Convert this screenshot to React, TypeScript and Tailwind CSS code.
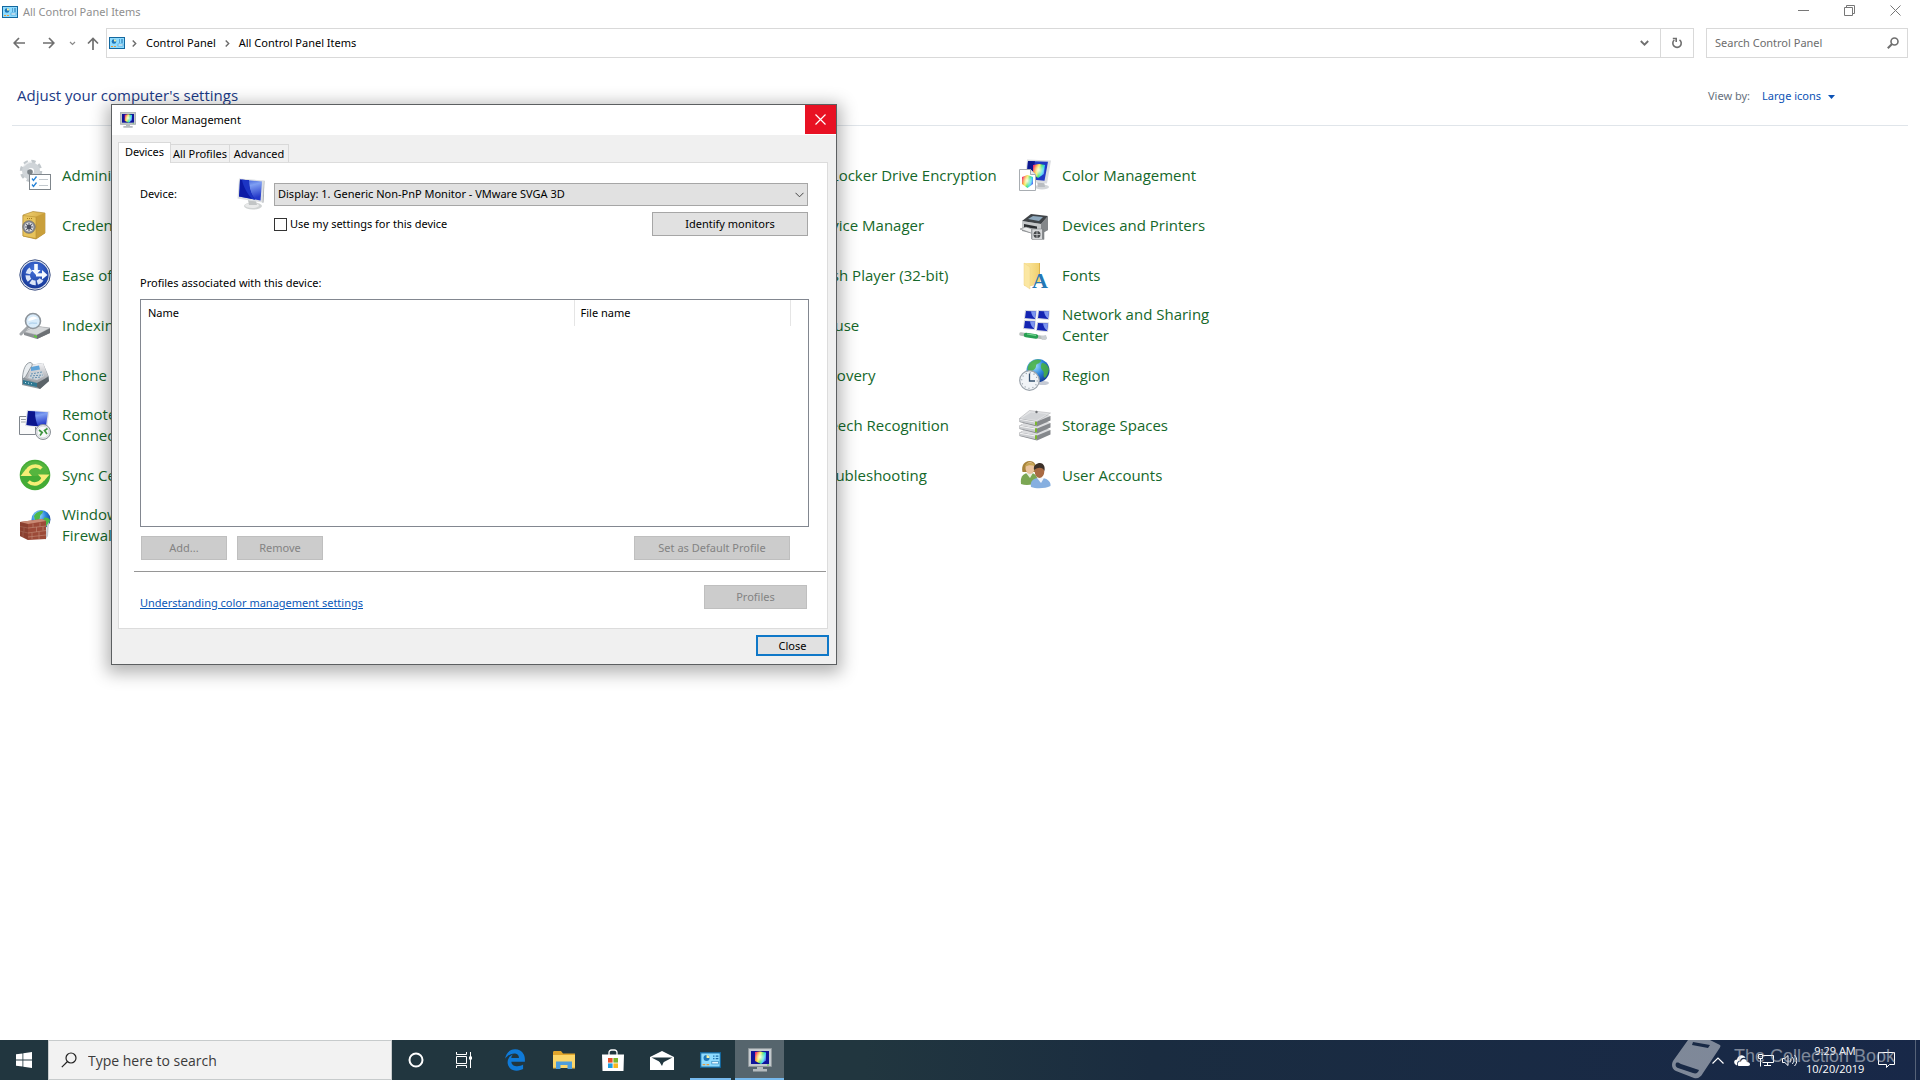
import { useState } from "react";
import type { ReactNode } from "react";
import { FaEdgeLegacy } from "react-icons/fa";

/* ---------- shared gradients ---------- */

function IconDefs() {
  return (
    <svg className="absolute size-0" aria-hidden="true">
      <defs>
        <linearGradient id="screen" x1="0" y1="0" x2="0.3" y2="1">
          <stop offset="0" stopColor="#2a49cf" />
          <stop offset="0.4" stopColor="#7f9ff2" />
          <stop offset="1" stopColor="#2338c9" />
        </linearGradient>
        <linearGradient id="rainbow" x1="0" y1="0.2" x2="1" y2="0.6">
          <stop offset="0" stopColor="#f0287c" />
          <stop offset="0.25" stopColor="#f9a63a" />
          <stop offset="0.42" stopColor="#f5f04a" />
          <stop offset="0.6" stopColor="#46e264" />
          <stop offset="0.8" stopColor="#35d6f0" />
          <stop offset="1" stopColor="#5a62f2" />
        </linearGradient>
        <radialGradient id="shine" cx="0.5" cy="0.45" r="0.5">
          <stop offset="0" stopColor="#fff" stopOpacity="0.85" />
          <stop offset="1" stopColor="#fff" stopOpacity="0" />
        </radialGradient>
        <linearGradient id="metal" x1="0" y1="0" x2="0" y2="1">
          <stop offset="0" stopColor="#f4f4f6" />
          <stop offset="1" stopColor="#96999f" />
        </linearGradient>
        <linearGradient id="gold" x1="0" y1="0" x2="1" y2="1">
          <stop offset="0" stopColor="#f1d273" />
          <stop offset="1" stopColor="#c08f25" />
        </linearGradient>
        <radialGradient id="blueBall" cx="0.5" cy="0.3" r="0.8">
          <stop offset="0" stopColor="#4372dc" />
          <stop offset="1" stopColor="#10308f" />
        </radialGradient>
        <radialGradient id="globe" cx="0.35" cy="0.3" r="0.8">
          <stop offset="0" stopColor="#a8e6ff" />
          <stop offset="0.5" stopColor="#2c85dc" />
          <stop offset="1" stopColor="#10308c" />
        </radialGradient>
        <linearGradient id="folder" x1="0" y1="0" x2="1" y2="0">
          <stop offset="0" stopColor="#fbe9a8" />
          <stop offset="1" stopColor="#f1cf6b" />
        </linearGradient>
      </defs>
    </svg>
  );
}

function Icon32({ children }: { children: ReactNode }) {
  return (
    <svg className="size-8 shrink-0" viewBox="0 0 32 32" fill="none" aria-hidden="true">
      {children}
    </svg>
  );
}

/* ---------- control panel icons ---------- */

function AdminToolsIcon() {
  return (
    <Icon32>
      <circle cx="12" cy="12" r="9.500" stroke="#c2c8cc" strokeWidth="3.500" strokeDasharray="4.200 3.260" />
      <circle cx="12" cy="12" r="6" stroke="#cfd4d8" strokeWidth="6" />
      <circle cx="11" cy="13" r="2.800" fill="#7d8489" />
      <path d="M5 7a10 10 0 0 1 8-4" stroke="#e9ecee" strokeWidth="1.500" />
      <rect x="10.500" y="15.500" width="21" height="15" fill="#fff" stroke="#7f868c" />
      <path d="m13 19.500 1.500 2 3-4M13 25.500l1.500 2 3-4" stroke="#2583d8" strokeWidth="1.300" />
      <path d="M20 20.500h9M20 26.500h9" stroke="#c3c9ce" />
    </Icon32>
  );
}

function CredentialIcon() {
  return (
    <Icon32>
      <path d="M4 6 14 2.500 26 4v20l-9 6L4 27z" fill="url(#gold)" stroke="#a57c22" strokeWidth="0.600" />
      <path d="M17 7.500 26 4v20l-9 6z" fill="#c99f3b" />
      <path d="M4 6.500 17 8v21.500L4 27z" fill="#e7c35c" stroke="#b58e33" strokeWidth="0.600" />
      <path d="M8 9.500h6" stroke="#a47b20" strokeDasharray="1 1" />
      <circle cx="10" cy="18" r="6.300" fill="#8b8d94" stroke="#5d5e66" strokeWidth="0.600" />
      <circle cx="10" cy="18" r="4.500" fill="#dfe1e6" />
      <path d="M10 14v8M6 18h8M7.200 15.200l5.600 5.600M12.800 15.200l-5.600 5.600" stroke="#565a68" strokeWidth="1.100" />
      <circle cx="10" cy="18" r="2.200" fill="#4a4e60" />
    </Icon32>
  );
}

function EaseOfAccessIcon() {
  return (
    <Icon32>
      <circle cx="16" cy="16" r="15.200" fill="#e4e8ef" stroke="#3b4f82" strokeWidth="1" />
      <circle cx="16" cy="16" r="13.600" fill="url(#blueBall)" />
      <path d="M22.500 20.500a7.500 7.500 0 1 1-10.500-10.300" stroke="#dce6f7" strokeWidth="4.600" strokeDasharray="5.300 1.600" />
      <path d="M15.200 5h3.600v6h2.700L17 16l-4.500-5h2.700z" fill="#f6faff" />
      <path d="M17 14.300h6V11l5.500 5-5.500 4.500v-3h-6z" fill="#f6faff" />
    </Icon32>
  );
}

function IndexingIcon() {
  return (
    <Icon32>
      <path d="m5 23 11-6 15 2v5l-13 6-13-4z" fill="#8c9094" />
      <path d="m5 23 11-6 15 2-13 7z" fill="#d5d7d9" stroke="#a0a3a6" strokeWidth="0.500" />
      <path d="M18 26v4l13-6v-4.500z" fill="#6c7074" />
      <path d="m15 26 3 1v2l-3-1z" fill="#5fc83f" />
      <path d="m9 18-7 7" stroke="#a2a6aa" strokeWidth="3" strokeLinecap="round" />
      <circle cx="14" cy="12" r="7.500" fill="#d9ecfb" stroke="#8e959c" strokeWidth="1.600" />
      <path d="M9 11.500a6 6 0 0 1 10-2c-3 0-6 3-10 2z" fill="#fff" />
      <path d="M10 15c3-2 6 0 8-1" stroke="#b7d6ef" strokeWidth="1.500" />
    </Icon32>
  );
}

function PhoneIcon() {
  return (
    <Icon32>
      <path d="M3 19 10 6l14-2 6 14v4l-9 8-18-4z" fill="#8d969c" />
      <path d="M4 18 11 6l13-2 5 13-9 8z" fill="url(#metal)" />
      <path d="m12 8 8-1.500 1 4-9 1.500z" fill="#5fa3d8" />
      <path d="m11 14 12-2 2 5-7 4-9-2z" fill="#ccd4da" />
      <path d="m12 15 11-2M11 17l13-1M13 19l9-1" stroke="#5c8aac" strokeWidth="1" strokeDasharray="1.800 1.300" />
      <path d="M3.500 18.500C4 11 6.500 4 11 3.500c3 0 2.500 3 1 4.500l-5 9c-1 2-3.500 3.500-3.500 1.500z" fill="#e9edf0" stroke="#6f797f" strokeWidth="0.700" />
      <path d="m4 21 14 3v4L4 25z" fill="#2f7791" />
      <path d="m18 24 11-6 1 4-9 8-3-2z" fill="#5b6368" />
      <path d="M6 23.500h1M9 24.100h1M12 24.700h1" stroke="#c5e6f0" />
    </Icon32>
  );
}

function RemoteIcon() {
  return (
    <Icon32>
      <path d="M.5 7.500h16v18H.5z" fill="#fafafa" stroke="#7f858c" />
      <path d="M2 10.500h6M2 13h5" stroke="#9aa1a8" />
      <path d="m8 1 22.500 1.500L28 19 6 17z" fill="#dfe1e6" />
      <path d="m9 2 20 1.200L26.800 18 7.500 16z" fill="url(#screen)" />
      <path d="m9 2 7 .4c0 6 1 10 3 14.800L7.500 16z" fill="#0b158d" />
      <circle cx="24" cy="23" r="7.500" fill="#e5e7ea" stroke="#8a9096" />
      <circle cx="24" cy="23" r="5.800" fill="#f8f9fa" stroke="#c7ccd0" strokeWidth="0.500" />
      <path d="m20 21 3.200 2.500L21 26.500" stroke="#3f9440" strokeWidth="1.700" />
      <path d="m28.500 19.500-3 2 2.500 3.500" stroke="#3f9440" strokeWidth="1.700" />
    </Icon32>
  );
}

function SyncIcon() {
  return (
    <Icon32>
      <circle cx="16" cy="16" r="15.300" fill="#43ab35" />
      <path d="M2 14a14.200 14.200 0 0 1 28 0c-9 4-19 4-28 0z" fill="#62bd45" opacity="0.600" />
      <path d="M7.500 14.500a9 9 0 0 1 15-5" stroke="#f6ee76" strokeWidth="3.600" />
      <path d="M24.500 17.500a9 9 0 0 1-15 5" stroke="#f6ee76" strokeWidth="3.600" />
      <path d="M19 15.500h11.500L25 22z" fill="#f6ee76" />
      <path d="M1.500 17H13L7 10z" fill="#f6ee76" />
    </Icon32>
  );
}

function FirewallIcon() {
  return (
    <Icon32>
      <circle cx="22" cy="10.500" r="9.500" fill="url(#globe)" />
      <path d="M15 7c3-5 7-5 9-5 0 3-3 3-3 6s-3 4-5 3zM25 9c2-1 5 0 6 2-1 5-3 6-5 7-1-3-3-5-1-9z" fill="#4db848" />
      <path d="m28 16 2-3-1 14-3 4z" fill="#c9cbd0" />
      <path d="m1 13 22-3 4 2v18L9 31l-8-4z" fill="#9c4a38" />
      <path d="m1 13 22-3 4 2-18 3z" fill="#c98a74" />
      <path d="M1 17.500 9 19l18-2M1 22l8 2 18-2.500M5 18.500v4M14 14.500v4M21 13.500v4M17.500 18v5M24 17.500v4M13 24v6M20 23v7M9 28l18-2M4 23v5" stroke="#bf8672" strokeWidth="0.700" />
      <path d="M9 15v16l-8-4V13z" fill="#6d2b20" opacity="0.350" />
    </Icon32>
  );
}

function ColorIcon() {
  return (
    <Icon32>
      <ellipse cx="23" cy="28" rx="7" ry="2.500" fill="#d3d6d9" />
      <path d="M18 22h7l1 6h-7z" fill="#b9bdc1" />
      <path d="m8 .5 24 1-4 23-22-2z" fill="#dadce0" />
      <path d="m9 2 20 .8-3.500 19L7.500 20z" fill="#1f39c4" />
      <path d="m9 2 7 .3-3 18L7.500 20z" fill="#0d178f" />
      <path d="m14 6 6-1 6 1-1 9-6 4-5-4z" fill="url(#rainbow)" />
      <path d="m14 6 6-1 6 1-1 9-6 4-5-4z" fill="url(#shine)" />
      <path d="M.5 10.500h11l5 5v16H.5z" fill="#fff" stroke="#a8adb2" />
      <path d="M11.500 10.500v5h5" fill="#e8eaec" stroke="#a8adb2" />
      <path d="m3 18 5.500-2L14 18v7l-5.500 4L3 25z" fill="url(#rainbow)" />
      <path d="m3 18 5.500-2L14 18v7l-5.500 4L3 25z" fill="url(#shine)" />
    </Icon32>
  );
}

function PrintersIcon() {
  return (
    <Icon32>
      <path d="m3 13 9-7 17 2v13l-10 5-16-4z" fill="#9b9ea1" />
      <path d="m3 12 9-7 17 2-7 8z" fill="#3f4347" />
      <path d="m9 10 5-3 10 1-4 4z" fill="#8fa9bd" />
      <path d="m3 12 19 3v9l-6 1-13-5z" fill="#c5c7c9" />
      <path d="m22 15 7-8v14l-7 4z" fill="#84878a" />
      <path d="m5 15 13 2.500V20L5 18z" fill="#2b2e31" />
      <path d="m1 20 6-2 10 3-5 3z" fill="#eceded" stroke="#77797c" strokeWidth="0.600" />
      <path d="M12 20h8v10h-8z" fill="#a7aaae" />
      <path d="M13 20h12v10.500H13z" fill="#d5d7d9" stroke="#85888b" strokeWidth="0.600" />
      <circle cx="18" cy="25.500" r="3.500" fill="#46494c" />
      <path d="M18 22v7M14.500 25.500h7" stroke="#cfd1d3" strokeWidth="0.800" />
      <path d="M24 20v10" stroke="#6d7073" strokeWidth="1.500" />
    </Icon32>
  );
}

function FontsIcon() {
  return (
    <Icon32>
      <path d="M5 4h16v19l-8 4H5z" fill="url(#folder)" />
      <path d="m5 4 6 4v22l-6-4z" fill="#fbe7a2" stroke="#eed084" strokeWidth="0.500" />
      <path d="M20.500 4v12" stroke="#dcb24c" />
      <text x="13" y="29" fontFamily="Liberation Serif, serif" fontWeight="bold" fontSize="22" fill="#2478b5">
        A
      </text>
    </Icon32>
  );
}

function MiniScreen({ x, y }: { x: number; y: number }) {
  return (
    <g transform={`translate(${x} ${y})`}>
      <path d="m1 0 12 .6-1 9.400L0 9z" fill="#d5d8e0" />
      <path d="m2 1 10 .5-1 7.500L1 8z" fill="#1324b2" />
      <path d="m7 1.300 5 .2-1 7C9 7 7.500 5 7 1.300z" fill="#7d96ef" />
    </g>
  );
}

function NetworkIcon() {
  return (
    <Icon32>
      <MiniScreen x={5} y={1} />
      <MiniScreen x={18} y={1} />
      <MiniScreen x={4} y={11} />
      <MiniScreen x={17} y={13} />
      <path d="m2 25 24 4" stroke="#b7beba" strokeWidth="3.500" strokeLinecap="round" />
      <path d="m7 26 10 1.500" stroke="#27a052" strokeWidth="4.500" strokeLinecap="round" />
      <path d="m8 25 9 1.300" stroke="#78d592" strokeWidth="1.200" />
      <path d="m22 27 5-1 1 4-5 1z" fill="#c9ced1" />
    </Icon32>
  );
}

function RegionIcon() {
  return (
    <Icon32>
      <ellipse cx="24" cy="24" rx="6" ry="2" fill="#c5cad4" />
      <circle cx="19" cy="11.500" r="11.500" fill="url(#globe)" />
      <path d="M10 5c4-5 9-5 12-4 0 4-5 3-5 6s-4 6-8 5c-1-3 0-5 1-7zM23 4c3 0 6 2 7 6-1 3-1 6-4 9-3-2 0-5-2-7s-3-5-1-8z" fill="#49b23d" opacity="0.850" />
      <circle cx="10.500" cy="21.500" r="9.800" fill="#f1f4f7" stroke="#9ba3ab" strokeWidth="1.200" />
      <circle cx="10.500" cy="21.500" r="7.800" stroke="#8e99a4" strokeWidth="1.200" strokeDasharray="1 3.084" />
      <path d="M10.500 14.500v7.500h5.500" stroke="#35506e" strokeWidth="1.300" />
    </Icon32>
  );
}

function Disk({ y }: { y: number }) {
  return (
    <g transform={`translate(0 ${y})`}>
      <path d="m.5 5.500 10-5 21 2.500v4.500L18 13.500.5 9z" fill="#85888c" />
      <path d="m.5 5.500 10-5 21 2.500L18 8.500z" fill="#dcdddf" />
      <path d="M.5 5.500 18 8.500v4L.5 8.500z" fill="#c9cbce" />
      <path d="m1 6.300 16 2.800" stroke="#fff" strokeWidth="0.800" />
      <path d="M16 8.300h2v4h-2z" fill="#7cb82f" />
    </g>
  );
}

function StorageIcon() {
  return (
    <Icon32>
      <Disk y={18} />
      <Disk y={11} />
      <Disk y={4} />
      <path d="m.5 9.500 10-8 21 2.500L18 12.500z" fill="#e3e4e6" stroke="#a9abae" strokeWidth="0.500" />
      <path d="m2 9.500 10-6 16 1.500-10 6z" fill="#d2d4d7" />
      <circle cx="17.500" cy="3" r="1.200" fill="#6d7074" />
    </Icon32>
  );
}

function UsersIcon() {
  return (
    <Icon32>
      <path d="M2 25c-1-7 2-10 6-11h5c4 1 6 5 6 9-5 3-12 4-17 2z" fill="#7ba653" />
      <path d="M7 14h7l-3 5z" fill="#e9efdf" />
      <path d="M3.500 13C2 7 5 2 10.500 2S18 6 16.500 13z" fill="#a8843c" />
      <ellipse cx="11" cy="9" rx="4.500" ry="6" fill="#eac39d" />
      <path d="M6 8c0-5 8-6 10-1-4-1-7-1-10 1z" fill="#c6a553" />
      <path d="M12 28c-1-6 2-8 6-9h6c5 1 8 4 7.500 8-5 2.500-14 3-19.500 1z" fill="#86afe0" />
      <path d="M18 19h7l-3 5z" fill="#f1f5fb" />
      <ellipse cx="20.500" cy="12.500" rx="4.800" ry="6.500" fill="#a96a43" />
      <path d="M15 11c-1-5 3-7 6-7s5.500 3 4.500 8c-2-4-6-4-10.500-1z" fill="#3c3029" />
    </Icon32>
  );
}

/* Small control panel glyph, reused in the title, address bar and taskbar */
function PanelIcon({ className }: { className: string }) {
  return (
    <svg className={className} viewBox="0 0 16 12" fill="none" aria-hidden="true">
      <rect x="0.5" y="0.5" width="15" height="11" fill="#8fdcff" stroke="#14689f" />
      <circle cx="5" cy="4.500" r="2.300" fill="#1f77b8" />
      <path d="M5 4.500V2.200A2.300 2.300 0 0 1 7.300 4.500z" fill="#f4f0a5" />
      <path d="M10 3h1M12 3h2M10 5h1M12 5h2" stroke="#1f6da8" />
      <rect x="9" y="7" width="5" height="2" fill="#e7f8ff" stroke="#2a85bd" strokeWidth="0.500" />
      <path d="M2 9.500h2M5 9.500h2" stroke="#e69b3e" />
    </svg>
  );
}

function ColorMonitorIcon({ className }: { className: string }) {
  return (
    <svg className={className} viewBox="0 0 24 24" fill="none" aria-hidden="true">
      <path d="M.5.500h23v18H.500z" fill="#c3c9cc" stroke="#8f979b" />
      <path d="M3 3h18v13H3z" fill="#10149a" />
      <path d="m7 4 5-.5 6 1v8L13 16l-6-3z" fill="url(#rainbow)" />
      <path d="m7 4 5-.5 6 1v8L13 16l-6-3z" fill="url(#shine)" />
      <path d="M9 19h6v2h4v2.500H5V21h4z" fill="#b5bbbe" />
      <path d="M19 17h2" stroke="#5fd14c" />
    </svg>
  );
}

function MonitorIcon() {
  return (
    <svg className="h-8 w-7 shrink-0" viewBox="0 0 28 32" fill="none" aria-hidden="true">
      <ellipse cx="16" cy="28" rx="9" ry="3.500" fill="#d0d3d3" />
      <ellipse cx="15" cy="27.500" rx="7" ry="2.600" fill="#e9eaea" />
      <path d="m11 22 8 1 1 4h-8z" fill="#c2c5c6" />
      <path d="m2 .5 25 2-1.500 22L.5 20.500z" fill="#dcdfe2" />
      <path d="m3 1.500 22 2-1.500 19L2 18.500z" fill="url(#screen)" />
      <path d="m3 1.500 9 .8c0 8 2 14 6 19.200L2 18.500z" fill="#0b1aa5" />
      <path d="m5 1.700 7 .6c0 8 2 14 6 19.200l-3-.5C10 15 6 8 5 1.700z" fill="#1c35c4" />
      <path d="m27 2.500.5.500-1 21.500-1 .5z" fill="#9fa4a9" />
    </svg>
  );
}

/* ---------- control panel ---------- */

const items: { name: string; col: 1 | 4 | 5; icon?: () => ReactNode }[] = [
  { name: "Administrative Tools", col: 1, icon: AdminToolsIcon },
  { name: "BitLocker Drive Encryption", col: 4 },
  { name: "Color Management", col: 5, icon: ColorIcon },
  { name: "Credential Manager", col: 1, icon: CredentialIcon },
  { name: "Device Manager", col: 4 },
  { name: "Devices and Printers", col: 5, icon: PrintersIcon },
  { name: "Ease of Access Center", col: 1, icon: EaseOfAccessIcon },
  { name: "Flash Player (32-bit)", col: 4 },
  { name: "Fonts", col: 5, icon: FontsIcon },
  { name: "Indexing Options", col: 1, icon: IndexingIcon },
  { name: "Mouse", col: 4 },
  { name: "Network and Sharing Center", col: 5, icon: NetworkIcon },
  { name: "Phone and Modem", col: 1, icon: PhoneIcon },
  { name: "Recovery", col: 4 },
  { name: "Region", col: 5, icon: RegionIcon },
  { name: "RemoteApp and Desktop Connections", col: 1, icon: RemoteIcon },
  { name: "Speech Recognition", col: 4 },
  { name: "Storage Spaces", col: 5, icon: StorageIcon },
  { name: "Sync Center", col: 1, icon: SyncIcon },
  { name: "Troubleshooting", col: 4 },
  { name: "User Accounts", col: 5, icon: UsersIcon },
  { name: "Windows Defender Firewall", col: 1, icon: FirewallIcon },
];

const colStart = { 1: "col-start-1", 4: "col-start-4", 5: "col-start-5" };

function TitleBar() {
  return (
    <header className="flex h-6 items-center pr-0.5 pl-0.5">
      <PanelIcon className="h-3 w-4" />
      <h1 className="ml-[5px] flex-1 text-[11px] text-[#8f8f8f]">All Control Panel Items</h1>
      <div className="flex items-center pb-1 text-[#777]">
        <button aria-label="Minimize" className="flex h-5 w-[46px] items-center justify-center">
          <svg className="size-[11px]" viewBox="0 0 11 11" stroke="currentColor"><path d="M0 5.500h11" /></svg>
        </button>
        <button aria-label="Restore" className="flex h-5 w-[46px] items-center justify-center">
          <svg className="size-[11px]" viewBox="0 0 11 11" fill="none" stroke="currentColor">
            <path d="M.5 2.500h8v8h-8zM2.500 2.500v-2h8v8h-2" />
          </svg>
        </button>
        <button aria-label="Close window" className="flex h-5 w-[46px] items-center justify-center">
          <svg className="size-[11px]" viewBox="0 0 11 11" stroke="currentColor"><path d="m.5.5 10 10M10.500.5l-10 10" /></svg>
        </button>
      </div>
    </header>
  );
}

function Chevron({ className }: { className?: string }) {
  return (
    <svg className={`h-[9px] w-[5px] shrink-0 ${className ?? ""}`} viewBox="0 0 5 9" fill="none" stroke="#6b6b6b" strokeWidth="1.400" aria-hidden="true">
      <path d="m.7 1.500 3 3-3 3" />
    </svg>
  );
}

function AddressBar() {
  return (
    <div className="mt-1 flex h-[30px] items-center pr-3 pl-[13px] text-[11px]">
      <button aria-label="Back">
        <svg className="h-3 w-[13px]" viewBox="0 0 13 12" fill="none" stroke="#6f6f6f" strokeWidth="1.700"><path d="M6 1 1.200 6 6 11M1.200 6H12" /></svg>
      </button>
      <button aria-label="Forward" className="ml-4">
        <svg className="h-3 w-[13px]" viewBox="0 0 13 12" fill="none" stroke="#6f6f6f" strokeWidth="1.700"><path d="m7 1 4.800 5L7 11M11.800 6H1" /></svg>
      </button>
      <button aria-label="Recent locations" className="ml-[14px]">
        <svg className="h-[5px] w-[7px]" viewBox="0 0 7 5" fill="none" stroke="#8a8a8a" strokeWidth="1.200"><path d="m1 1 2.500 2.500L6 1" /></svg>
      </button>
      <button aria-label="Up one level" className="ml-[11px]">
        <svg className="h-[13px] w-3" viewBox="0 0 12 13" fill="none" stroke="#6f6f6f" strokeWidth="1.700"><path d="m1 6.500 5-5 5 5M6 1.500V13" /></svg>
      </button>
      <nav aria-label="Address" className="ml-[7px] flex h-full flex-1 items-center border border-[#d9d9d9] pl-[2px]">
        <PanelIcon className="h-3 w-4" />
        <Chevron className="ml-[7px]" />
        <a href="#control-panel" className="ml-[9px] text-black">Control Panel</a>
        <Chevron className="ml-[9px]" />
        <a href="#all-items" className="ml-[9px] flex-1 text-black">All Control Panel Items</a>
        <button aria-label="Previous locations" className="mr-[11px]">
          <svg className="h-[6px] w-[9px]" viewBox="0 0 9 6" fill="none" stroke="#6f6f6f" strokeWidth="1.800"><path d="m.8 1 3.700 3.700L8.200 1" /></svg>
        </button>
        <button aria-label="Refresh" className="flex h-full w-[33px] items-center justify-center border-l border-[#d9d9d9]">
          <svg className="size-3" viewBox="0 0 12 12" fill="none" stroke="#6f6f6f" strokeWidth="1.600">
            <path d="M8.500 2.800a4.200 4.200 0 1 1-5.200.2" />
            <path d="M1.800 1.500h3.400v3.400" />
          </svg>
        </button>
      </nav>
      <label className="ml-3 flex h-full w-[202px] items-center border border-[#d9d9d9] pr-2 pl-2">
        <input
          type="search"
          aria-label="Search Control Panel"
          placeholder="Search Control Panel"
          className="min-w-0 flex-1 outline-none placeholder:text-[#6d6d6d]"
        />
        <svg className="size-3" viewBox="0 0 12 12" fill="none" stroke="#6f6f6f" strokeWidth="1.600" aria-hidden="true">
          <circle cx="7.500" cy="4.500" r="3.500" />
          <path d="M5 7 .8 11.200" strokeWidth="2" />
        </svg>
      </label>
    </div>
  );
}

function ControlPanel() {
  return (
    <main className="flex-1 overflow-hidden">
      <TitleBar />
      <AddressBar />
      <div className="mx-3 mt-5 flex h-12 items-center border-b border-[#e0e5ea] pb-3 pl-[5px]">
        <h2 className="flex-1 text-[15px] text-[#1b3a86] [font-family:'Open_Sans',sans-serif]">Adjust your computer's settings</h2>
        <div className="mr-[73px] flex items-center pt-0.5 text-[11px]">
          <label htmlFor="view-by" className="text-[#66707c]">View by:</label>
          <select id="view-by" className="ml-3 w-[66px] appearance-none text-[#0b52b5] outline-none">
            <option>Large icons</option>
          </select>
          <svg className="h-1 w-[7px]" viewBox="0 0 7 4" aria-hidden="true"><path d="M0 0h7L3.500 4z" fill="#0b52b5" /></svg>
        </div>
      </div>
      <ul className="mt-6 ml-[19px] grid auto-rows-[50px] grid-cols-[repeat(5,250px)] [font-family:'Open_Sans',sans-serif]">
        {items.map(({ name, col, icon: ItemIcon }) => (
          <li key={name} className={`flex items-center ${colStart[col]}`}>
            <a href="#item" className="flex items-center gap-[11px] text-[15px] leading-[21px] text-[#15682a]">
              {ItemIcon ? <ItemIcon /> : <span className="size-8 shrink-0" />}
              <span className="w-[190px]">{name}</span>
            </a>
          </li>
        ))}
      </ul>
    </main>
  );
}

/* ---------- color management dialog ---------- */

const disabledButton = "h-6 border border-[#bfbfbf] bg-[#cccccc] text-[#838383]";

function ColorDialog() {
  const [tab, setTab] = useState("Devices");

  return (
    <section
      role="dialog"
      aria-labelledby="dialog-title"
      className="absolute top-[104px] left-[111px] w-[726px] border border-[#5c5f61] bg-[#f0f0f0] text-[11px] text-black shadow-[0_4px_16px_4px_rgba(0,0,0,0.3)]"
    >
      <div className="flex h-[30px] items-center bg-white pl-2">
        <ColorMonitorIcon className="size-4" />
        <h2 id="dialog-title" className="ml-[5px] flex-1">Color Management</h2>
        <button aria-label="Close dialog" className="flex h-[29px] w-[31px] items-center justify-center self-start bg-[#e81123]">
          <svg className="size-[11px]" viewBox="0 0 11 11" stroke="#fff" strokeWidth="1.200"><path d="m.5.5 10 10M10.500.5l-10 10" /></svg>
        </button>
      </div>

      <div className="px-1.5 pt-[7px]">
        <div role="tablist" className="flex h-5 items-end">
          {["Devices", "All Profiles", "Advanced"].map((name) => (
            <button
              key={name}
              role="tab"
              aria-selected={tab === name}
              onClick={() => setTab(name)}
              className={
                tab === name
                  ? "z-10 -mb-px h-[21px] w-[53px] border border-b-0 border-[#d9d9d9] bg-white pb-[2px]"
                  : "h-[18px] w-[59px] border border-b-0 border-l-0 border-[#d9d9d9] pt-px leading-4 whitespace-nowrap"
              }
            >
              {name}
            </button>
          ))}
        </div>

        {/* Tab page */}
        <div className="mr-0.5 border border-[#dcdcdc] bg-white pb-4">
          <div className="flex items-center pt-[15px] pl-[21px]">
            <label htmlFor="device" className="w-[97px]">Device:</label>
            <MonitorIcon />
            <div className="relative ml-[9px] h-[23px] w-[534px]">
              <select id="device" className="size-full appearance-none border border-[#a6a6a6] bg-[#e1e1e1] px-[3px] outline-none">
                <option>Display: 1. Generic Non-PnP Monitor - VMware SVGA 3D</option>
              </select>
              <svg className="pointer-events-none absolute top-[9px] right-1 h-[6px] w-[9px]" viewBox="0 0 9 6" fill="none" stroke="#444" aria-hidden="true">
                <path d="m.5.8 4 4 4-4" />
              </svg>
            </div>
          </div>

          <div className="mt-0.5 flex items-center justify-between pr-[19px] pl-[155px]">
            <label className="flex items-center gap-[3px]">
              <input type="checkbox" className="size-[13px] appearance-none border border-[#333] bg-white checked:bg-[#0078d7]" />
              Use my settings for this device
            </label>
            <button className="h-6 w-[156px] border border-[#a6a6a6] bg-[#e1e1e1]">Identify monitors</button>
          </div>

          <p className="mt-[38px] ml-[21px] leading-[18px]">Profiles associated with this device:</p>
          <div className="mt-[7px] ml-[21px] h-[228px] w-[669px] border border-[#828790]">
            <table className="w-full table-fixed border-collapse text-left">
              <thead>
                <tr className="h-[26px]">
                  <th className="w-[433px] border-r border-[#e5e5e5] pl-[7px] font-normal">Name</th>
                  <th className="w-[216px] border-r border-[#e5e5e5] pl-[6px] font-normal">File name</th>
                  <th aria-label="Actions" />
                </tr>
              </thead>
            </table>
          </div>

          <div className="mt-[9px] mr-[37px] ml-[22px] flex gap-[10px]">
            <button disabled className={`w-[86px] ${disabledButton}`}>Add...</button>
            <button disabled className={`w-[86px] ${disabledButton}`}>Remove</button>
            <button disabled className={`ml-auto w-[156px] ${disabledButton}`}>Set as Default Profile</button>
          </div>

          <hr className="mt-[11px] mr-px ml-[15px] border-[#969696]" />

          <div className="mt-[13px] mr-5 ml-[21px] flex items-start justify-between">
            <a href="#help" className="mt-[9px] leading-[18px] text-[#0a58b8] underline">Understanding color management settings</a>
            <button disabled className={`w-[103px] ${disabledButton}`}>Profiles</button>
          </div>
        </div>
      </div>

      <div className="flex justify-end pt-[6px] pr-[7px] pb-2">
        <button className="h-[21px] w-[73px] border-2 border-[#0f78c8] bg-[#e1e1e1] leading-none">Close</button>
      </div>
    </section>
  );
}

/* ---------- taskbar ---------- */

function Taskbar() {
  return (
    <footer className="relative flex h-10 items-stretch bg-linear-to-r from-[#21363f] from-45% via-[#1a2c40] via-60% to-[#182848] text-white [font-family:'Open_Sans',sans-serif]">
      <button aria-label="Start" className="flex w-12 items-center justify-center">
        <svg className="size-4" viewBox="0 0 16 16" fill="#fff"><path d="M0 2.300 6.500 1.400v6.100H0zM7.300 1.300 16 0v7.500H7.300zM0 8.400h6.500v6.200L0 13.700zM7.300 8.400H16V16l-8.700-1.200z" /></svg>
      </button>
      <label className="flex w-[344px] items-center gap-[11px] border border-[#c7cbcc] bg-[#f2f2f2] pl-3 text-[#333]">
        <svg className="size-4" viewBox="0 0 16 16" fill="none" stroke="#222" strokeWidth="1.200" aria-hidden="true">
          <circle cx="10" cy="6" r="5" />
          <path d="M6.500 9.500.8 15.200" />
        </svg>
        <input type="search" aria-label="Type here to search" placeholder="Type here to search" className="min-w-0 flex-1 text-[14px] outline-none placeholder:text-[#3b3b3b]" />
      </label>

      <button aria-label="Cortana" className="flex w-12 items-center justify-center">
        <svg className="size-4" viewBox="0 0 16 16" fill="none" stroke="#fff" strokeWidth="2"><circle cx="8" cy="8" r="6.500" /></svg>
      </button>
      <button aria-label="Task View" className="flex w-[47px] items-center justify-center">
        <svg className="size-4" viewBox="0 0 16 16" fill="none" stroke="#fff"><path d="M.5 0v2.500h10V0M.5 16v-2.500h10V16M.5 4.500h10v7H.500zM14.500 0v16" /><path d="M13 4.500h3v3h-3z" fill="#fff" stroke="none" /></svg>
      </button>
      <button aria-label="Microsoft Edge" className="flex w-14 items-center justify-center">
        <FaEdgeLegacy className="size-[22px] text-[#0f7ad8]" />
      </button>
      <button aria-label="File Explorer" className="flex w-[42px] items-center justify-center">
        <svg className="h-5 w-[22px]" viewBox="0 0 22 20" fill="none">
          <path d="M0 2.500C0 1.500.5 1 1.500 1H8l2 2.500h12V18H0z" fill="#e0a52c" />
          <path d="M0 5h22v13H0z" fill="#fbd669" />
          <path d="M3 11.500h16V19h-4.500v-4h-7v4H3z" fill="#4d9edd" />
          <path d="M0 17h3v1.500H0zM19 17h3v1.500h-3z" fill="#efc04f" />
        </svg>
      </button>
      <button aria-label="Microsoft Store" className="flex w-14 items-center justify-center">
        <svg className="h-[23px] w-[22px]" viewBox="0 0 22 23" fill="none">
          <path d="M7 6V3.500a2.500 2.500 0 0 1 2.500-2.500h3A2.500 2.500 0 0 1 15 3.500V6" stroke="#fff" strokeWidth="1.300" />
          <path d="M0 5.500h22L21.500 22H.500z" fill="#fff" />
          <path d="M6 9h4.600v4.600H6z" fill="#e8502a" />
          <path d="M11.400 9H16v4.600h-4.600z" fill="#7cb52a" />
          <path d="M6 14.400h4.600V19H6z" fill="#1d9de0" />
          <path d="M11.400 14.400H16V19h-4.600z" fill="#f9b81f" />
        </svg>
      </button>
      <button aria-label="Mail" className="flex w-[42px] items-center justify-center">
        <svg className="h-[19px] w-6" viewBox="0 0 24 19"><path d="M0 6 12 0l12 6v13H0z" fill="#fff" /><path d="M1.500 6.500h21L12 12z" fill="#21363f" /><path d="m9 10 3 5 2-5z" fill="#21363f" /></svg>
      </button>
      <button aria-label="All Control Panel Items" className="ml-[7px] flex w-[41px] items-center justify-center border-b-2 border-[#76b9ed] pt-0.5">
        <PanelIcon className="h-4 w-[21px]" />
      </button>
      <button aria-label="Color Management" className="ml-1 flex w-[49px] items-center justify-center border-b-2 border-[#76b9ed] bg-[#56656d] pt-0.5">
        <ColorMonitorIcon className="size-6" />
      </button>

      {/* Tray */}
      <div className="ml-auto flex items-center">
        <button aria-label="Show hidden icons" className="mr-[10px]">
          <svg className="h-[7px] w-3" viewBox="0 0 12 7" fill="none" stroke="#fff" strokeWidth="1.200"><path d="m.5 6.500 5.500-5.500 5.500 5.500" /></svg>
        </button>
        <button aria-label="OneDrive" className="mr-2">
          <svg className="h-[11px] w-4" viewBox="0 0 16 11" fill="#fff"><path d="M3 10.500C-1 9-.5 4.500 3 4.500 3.500 0 10-1.500 11.500 3c-4-1-5 1-5.500 2.500-3 .5-3 3-3 5z" /><path d="M4.500 11C2.500 9 4.500 6 7 6.500 8 3 12.500 3.500 13 7c3.500 0 4 4 1 4z" /></svg>
        </button>
        <button aria-label="Network" className="mr-2">
          <svg className="h-[13px] w-4" viewBox="0 0 16 13" fill="none" stroke="#fff"><path d="M4.500 1.500h11v7H4.500M6 11.500h7M9.500 9v3M.5.500h4v4h-4zM2.500 5v7.500" /></svg>
        </button>
        <button aria-label="Volume" className="mr-[8px]">
          <svg className="h-[13px] w-4" viewBox="0 0 16 13" fill="none" stroke="#fff"><path d="M.5 4.500h2.300L6 1.500v10L2.800 8.500H.500zM8 4.500c1 1.300 1 2.700 0 4M10.200 3c2 2.200 2 4.800 0 7M12.500 1c3 3.200 3 7.800 0 11" /></svg>
        </button>
        <div className="w-[58px] text-center text-[11px] leading-[18px] whitespace-nowrap">
          <div>9:29 AM</div>
          <div>10/20/2019</div>
        </div>
        <button aria-label="Notifications" className="ml-[14px]">
          <svg className="h-4 w-[17px]" viewBox="0 0 17 16" fill="none" stroke="#fff"><path d="M.5.500h16v12h-5l-3 3v-3h-8z" /></svg>
        </button>
        <div className="ml-5 h-10 w-[5px] border-l border-[#566278]" />
      </div>

      {/* Watermark over the tray */}
      <div className="pointer-events-none absolute right-[25px] bottom-0 flex items-start gap-[13px] text-[#c3c8d0] opacity-60">
        <svg className="h-10 w-[49px]" viewBox="0 0 49 40" fill="currentColor" aria-hidden="true">
          <path d="M16 0h22l10 5c1 1 0 3-1 4L31 33c-2 4-5 6-9 5L4 31c-4-2-5-6-3-10zM21 2l-1 3 16 3 2-3zM4 23c-1 3 0 4 2 5l15 5c3 1 5 0 6-3L9 24c-2-1-3-2-5-1z" fillRule="evenodd" />
        </svg>
        <span className="mt-1 text-lg leading-6 [font-family:'Liberation_Sans',Arial,sans-serif]">The Collection Book</span>
      </div>
    </footer>
  );
}

export default function App() {
  return (
    <div className="relative flex h-screen flex-col bg-white [font-family:'Noto_Sans','Open_Sans',sans-serif]">
      <IconDefs />
      <ControlPanel />
      <ColorDialog />
      <Taskbar />
    </div>
  );
}
